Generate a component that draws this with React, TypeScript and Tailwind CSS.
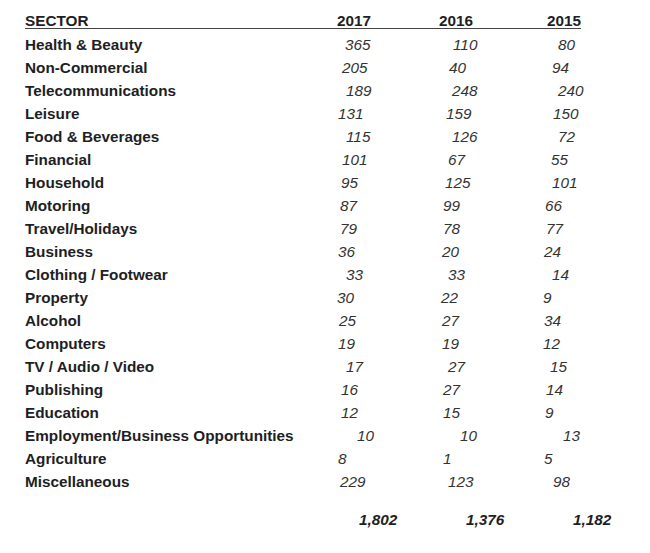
import React from "react";

type Row = {
  sector: string;
  values: [string, string, string];
  pads: [string, string, string];
};

const rows: Row[] = [
  { sector: "Health & Beauty", values: ["365", "110", "80"], pads: ["pl-[9px]", "pl-[15px]", "pl-[17px]"] },
  { sector: "Non-Commercial", values: ["205", "40", "94"], pads: ["pl-[6px]", "pl-[11px]", "pl-[11px]"] },
  { sector: "Telecommunications", values: ["189", "248", "240"], pads: ["pl-[10px]", "pl-[14px]", "pl-[17px]"] },
  { sector: "Leisure", values: ["131", "159", "150"], pads: ["pl-[2px]", "pl-[8px]", "pl-[12px]"] },
  { sector: "Food & Beverages", values: ["115", "126", "72"], pads: ["pl-[10px]", "pl-[14px]", "pl-[17px]"] },
  { sector: "Financial", values: ["101", "67", "55"], pads: ["pl-[6px]", "pl-[10px]", "pl-[10px]"] },
  { sector: "Household", values: ["95", "125", "101"], pads: ["pl-[5px]", "pl-[7px]", "pl-[11px]"] },
  { sector: "Motoring", values: ["87", "99", "66"], pads: ["pl-[4px]", "pl-[5px]", "pl-[4px]"] },
  { sector: "Travel/Holidays", values: ["79", "78", "77"], pads: ["pl-[4px]", "pl-[5px]", "pl-[5px]"] },
  { sector: "Business", values: ["36", "20", "24"], pads: ["pl-[2px]", "pl-[4px]", "pl-[3px]"] },
  { sector: "Clothing / Footwear", values: ["33", "33", "14"], pads: ["pl-[10px]", "pl-[10px]", "pl-[11px]"] },
  { sector: "Property", values: ["30", "22", "9"], pads: ["pl-[1px]", "pl-[3px]", "pl-[2px]"] },
  { sector: "Alcohol", values: ["25", "27", "34"], pads: ["pl-[3px]", "pl-[4px]", "pl-[3px]"] },
  { sector: "Computers", values: ["19", "19", "12"], pads: ["pl-[2px]", "pl-[4px]", "pl-[2px]"] },
  { sector: "TV / Audio / Video", values: ["17", "27", "15"], pads: ["pl-[10px]", "pl-[10px]", "pl-[9px]"] },
  { sector: "Publishing", values: ["16", "27", "14"], pads: ["pl-[5px]", "pl-[5px]", "pl-[5px]"] },
  { sector: "Education", values: ["12", "15", "9"], pads: ["pl-[5px]", "pl-[5px]", "pl-[4px]"] },
  { sector: "Employment/Business Opportunities", values: ["10", "10", "13"], pads: ["pl-[21px]", "pl-[22px]", "pl-[22px]"] },
  { sector: "Agriculture", values: ["8", "1", "5"], pads: ["pl-[2px]", "pl-[5px]", "pl-[3px]"] },
  { sector: "Miscellaneous", values: ["229", "123", "98"], pads: ["pl-[4px]", "pl-[10px]", "pl-[12px]"] },
];

const grid = "grid grid-cols-[311px_102px_103px_100px]";

export default function App(): React.ReactElement {
  return (
    <div className="min-h-[553px] w-[650px] bg-white pl-[25px] pt-[13px] font-['Liberation_Sans',Arial,sans-serif] text-[15.3px]">
      {/* header */}
      <div className={`${grid} w-[556px] border-b-[1.5px] border-[#444] font-bold leading-[15px] text-[#1e1e24]`}>
        <div>SECTOR</div>
        <div className="pl-[1px]">2017</div>
        <div className="pl-[1px]">2016</div>
        <div className="pl-[6px]">2015</div>
      </div>

      <div className="mt-[4px]">
        {rows.map((row) => (
          <div key={row.sector} className={`${grid} leading-[23px]`}>
            <div className="font-bold text-[#1e1e24]">{row.sector}</div>
            {row.values.map((v, i) => (
              <div key={i} className={`${row.pads[i]} italic text-[#333]`}>
                {v}
              </div>
            ))}
          </div>
        ))}
      </div>

      {/* totals */}
      <div className={`${grid} mt-[15px] font-bold italic leading-[23px] text-[#1e1e24]`}>
        <div />
        <div className="pl-[23px]">1,802</div>
        <div className="pl-[28px]">1,376</div>
        <div className="pl-[32px]">1,182</div>
      </div>
    </div>
  );
}
